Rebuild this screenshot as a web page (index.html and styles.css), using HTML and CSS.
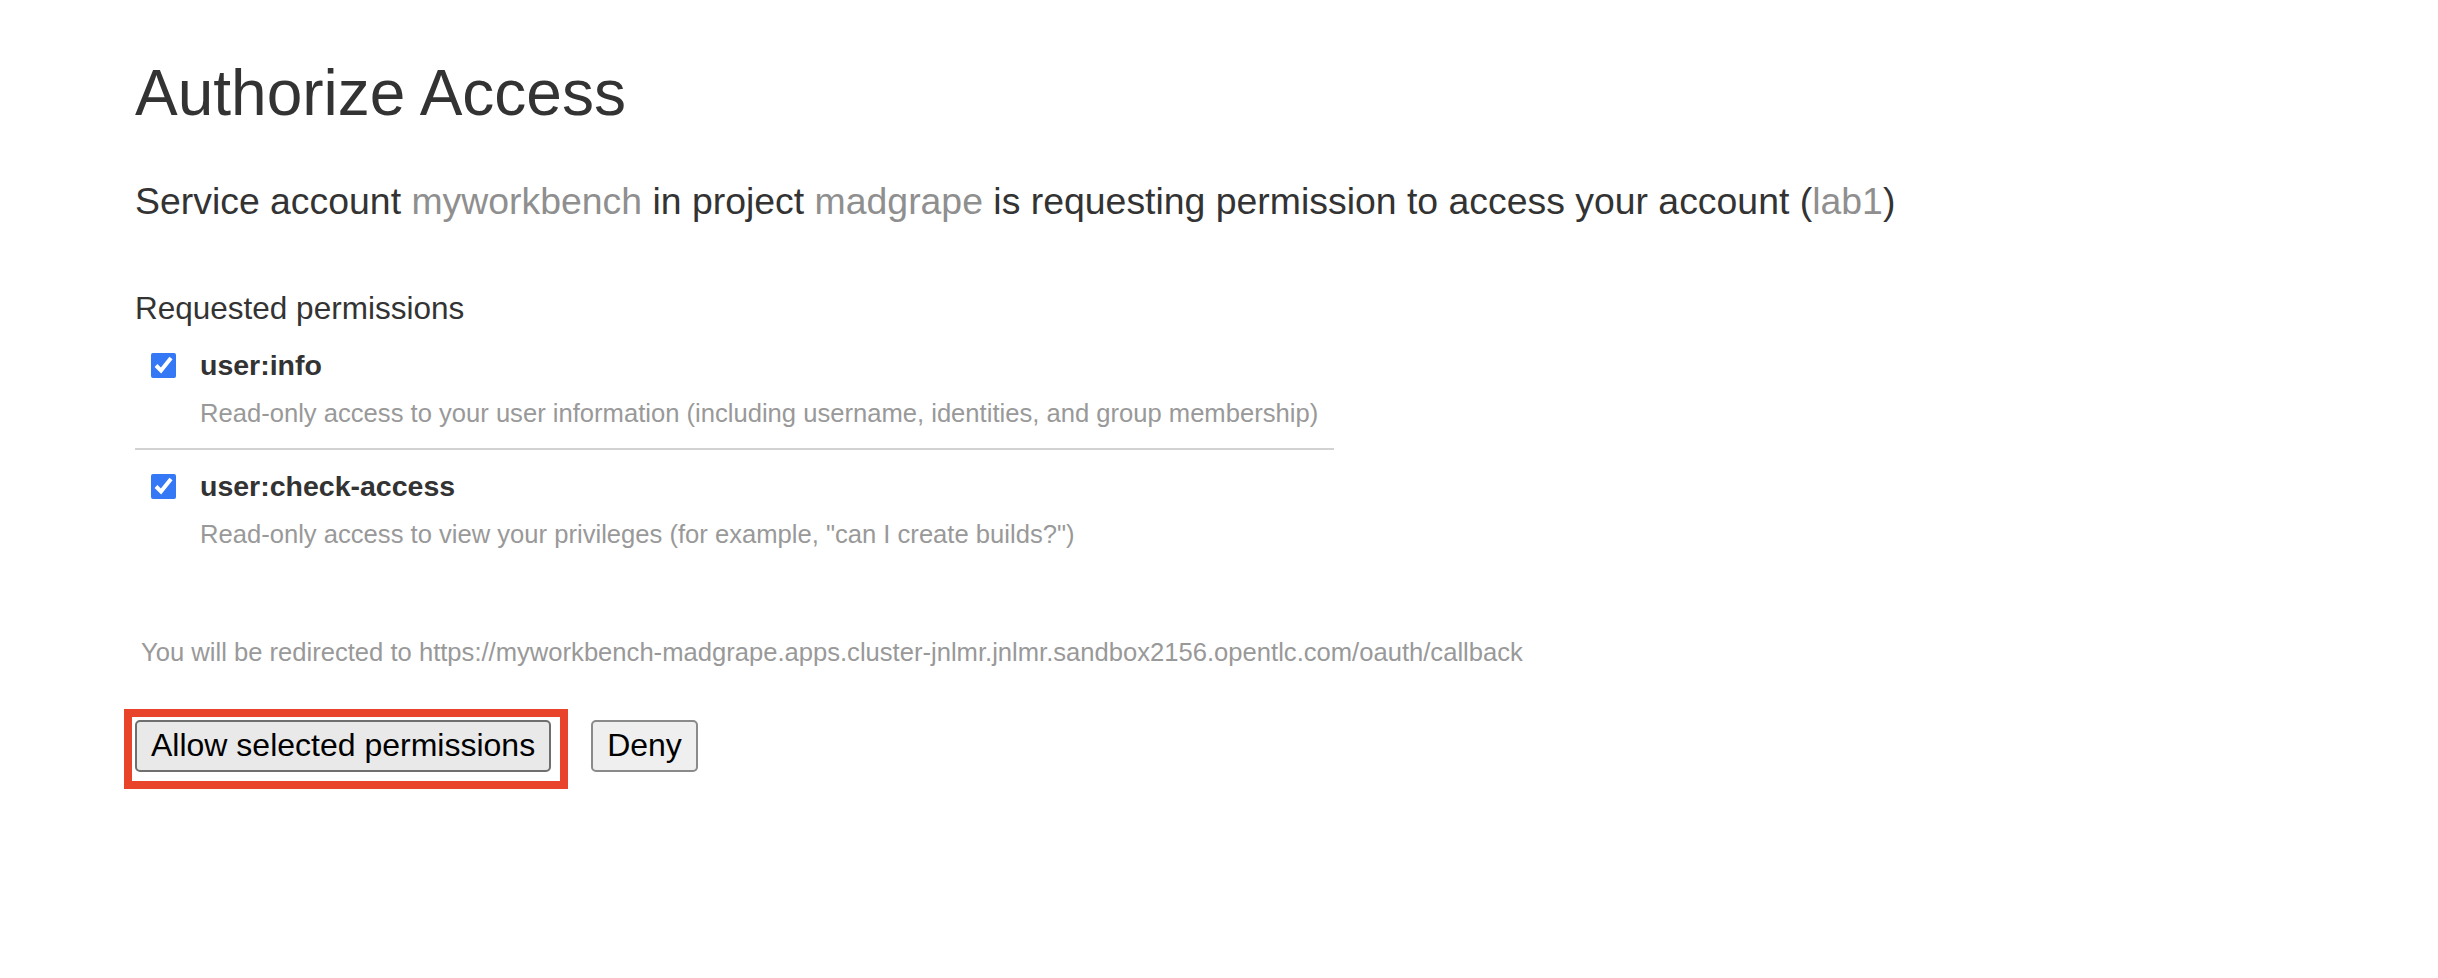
FILE: index.html
```html
<!DOCTYPE html>
<html lang="en">
<head>
<meta charset="utf-8">
<title>Authorize Access</title>
<link rel="stylesheet" href="styles.css">
</head>
<body>
<div class="page">
  <h1 class="title">Authorize Access</h1>
  <p class="lead">Service account <span class="muted">myworkbench</span> in project <span class="muted">madgrape</span> is requesting permission to access your account (<span class="muted">lab1</span>)</p>
  <h4 class="section">Requested permissions</h4>
  <ul class="perms">
    <li class="perm perm-divided">
      <label class="perm-head"><input class="perm-check" type="checkbox" checked><span class="perm-name">user:info</span></label>
      <div class="perm-desc">Read-only access to your user information (including username, identities, and group membership)</div>
    </li>
    <li class="perm">
      <label class="perm-head"><input class="perm-check" type="checkbox" checked><span class="perm-name">user:check-access</span></label>
      <div class="perm-desc">Read-only access to view your privileges (for example, "can I create builds?")</div>
    </li>
  </ul>
  <p class="redirect">You will be redirected to https://myworkbench-madgrape.apps.cluster-jnlmr.jnlmr.sandbox2156.opentlc.com/oauth/callback</p>
  <div class="actions">
    <span class="highlight"><button class="btn" type="button">Allow selected permissions</button></span>
    <button class="btn btn-deny" type="button">Deny</button>
  </div>
</div>
</body>
</html>
```
FILE: styles.css
```css
html, body {
  margin: 0;
  padding: 0;
  background: #ffffff;
}

body {
  font-family: "Liberation Sans", Arial, Helvetica, sans-serif;
  color: #333333;
}

.page {
  padding: 55px 0 0 135px;
}

.title {
  margin: 0;
  font-size: 64px;
  line-height: 76px;
  font-weight: 400;
  color: #333333;
}

.lead {
  margin: 48px 0 0;
  font-size: 37.4px;
  line-height: 44px;
  color: #333333;
}

.muted {
  color: #8f8f8f;
}

.section {
  margin: 66px 0 0;
  font-size: 31.5px;
  line-height: 38px;
  font-weight: 400;
  color: #333333;
}

.perms {
  list-style: none;
  margin: 0;
  padding: 0;
  width: 1199px;
}

.perm {
  padding: 20px 0 0;
}

.perm-divided {
  padding-bottom: 19px;
  border-bottom: 2px solid #d2d2d2;
}

.perm-divided + .perm {
  padding-top: 18px;
}

.perm-head {
  display: flex;
  align-items: center;
  gap: 24px;
  padding-left: 16px;
  height: 36px;
}

.perm-check {
  width: 25px;
  height: 25px;
  margin: 0;
  accent-color: #3478f6;
  flex: none;
}

.perm-name {
  font-size: 28.5px;
  line-height: 36px;
  font-weight: 700;
  color: #333333;
}

.perm-desc {
  margin-top: 14px;
  padding-left: 65px;
  font-size: 25.6px;
  line-height: 32px;
  color: #999999;
}

.redirect {
  margin: 86px 0 0;
  padding-left: 6px;
  font-size: 25.6px;
  line-height: 32px;
  color: #999999;
}

.actions {
  display: flex;
  align-items: flex-start;
  margin-top: 41px;
  margin-left: -11px;
}

.highlight {
  display: inline-flex;
  border: 8px solid #e8432b;
  padding: 3px 9px 9px 3px;
}

.btn {
  font-family: "Liberation Sans", Arial, Helvetica, sans-serif;
  font-size: 32px;
  line-height: 38px;
  color: #000000;
  background: #e9e9e9;
  border: 2px solid #6f6f6f;
  border-radius: 5px;
  padding: 4px 14px 6px;
  margin: 0;
}

.btn-deny {
  margin-left: 23px;
  margin-top: 11px;
  border-color: #8a8a8a;
  background: #efefef;
}
```
